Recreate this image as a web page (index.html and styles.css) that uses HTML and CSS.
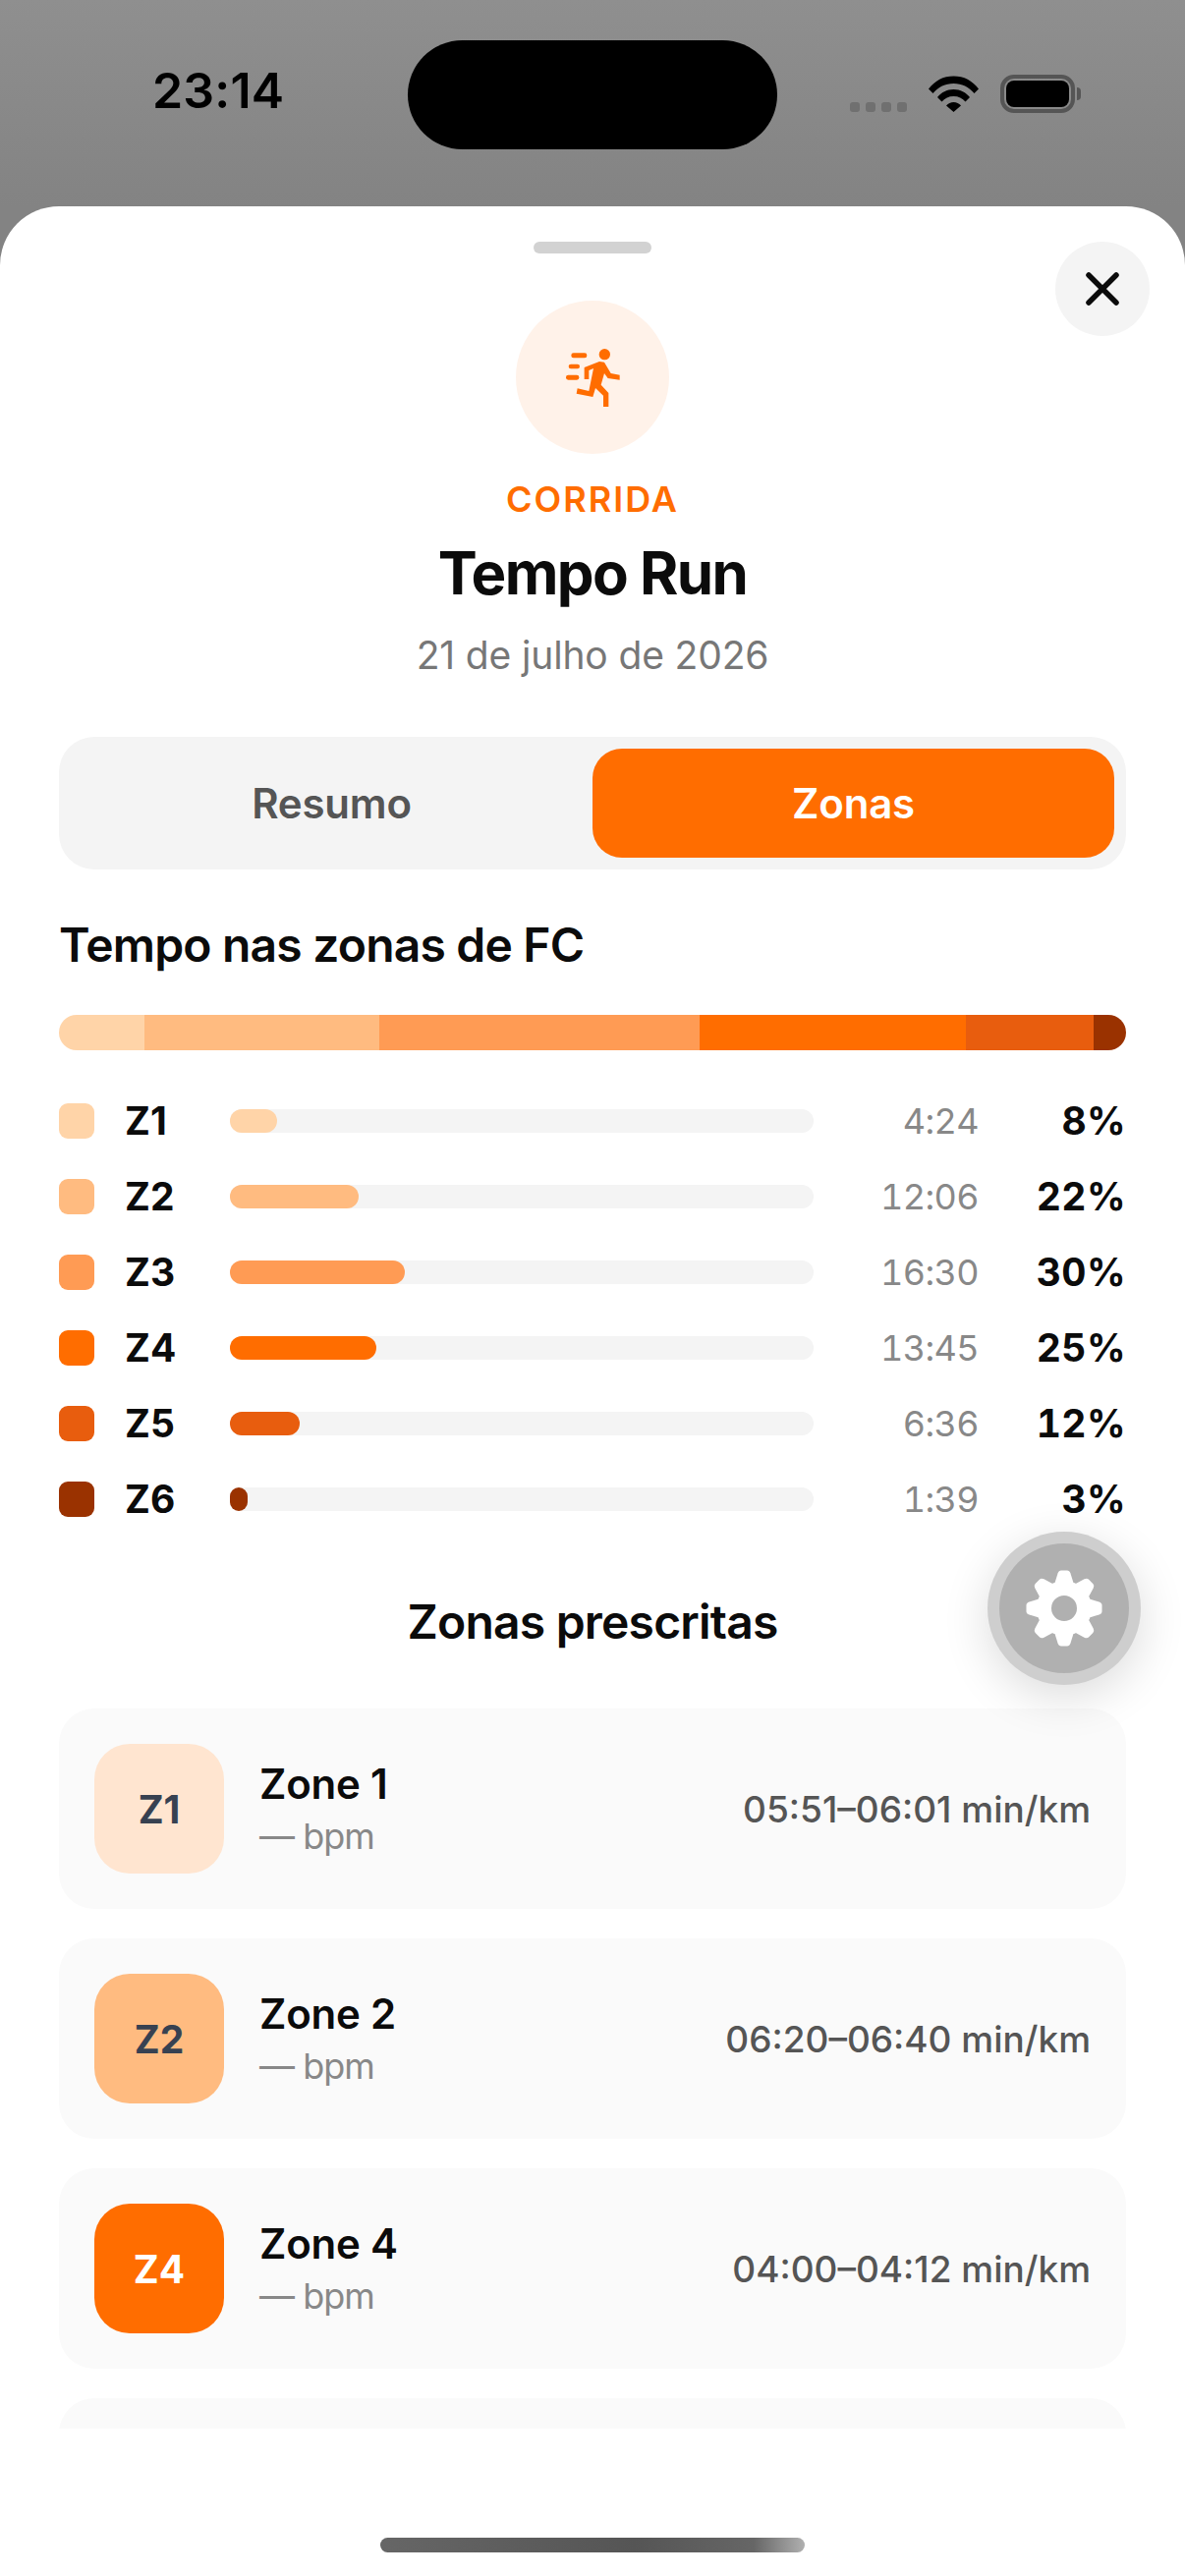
FILE: index.html
```html
<!doctype html>
<html lang="pt-br">
    <head>
        <meta charset="utf-8">
        <title>Tempo Run</title>
        <link rel="stylesheet" href="styles.css">
    </head>
    <body>
        <div class="statusbar">
            <div class="time">23:14</div>
            <div class="island"></div>
            <div class="indicators">
                <div class="signal"><i></i><i></i><i></i><i></i></div>
                <svg class="wifi" width="51" height="37" viewBox="0 0 51 37">
                    <path d="M0 13.5C6.5 5 15 0.5 25.500 0.500S44.500 5 51 13.500L46.500 18C41 11.500 34 8 25.500 8S10 11.500 4.500 18Z"/>
                    <path d="M9 22C13 17 18.500 14 25.500 14S38 17 42 22L37.500 26.500C34.500 23 30.500 21 25.500 21S16.500 23 13.500 26.500Z"/>
                    <path d="M18 30.500C20 28.500 22.500 27 25.500 27S31 28.500 33 30.500L25.500 37Z"/>
                </svg>
                <div class="battery"><div class="battery-fill"></div></div>
                <div class="battery-nub"></div>
            </div>
        </div>

        <div class="sheet">
            <div class="close">
                <svg width="36" height="36" viewBox="0 0 36 36"><path d="M4 4L32 32M32 4L4 32"/></svg>
            </div>

            <div class="content">
                <div class="handle"></div>
                <div class="sport-icon">
                    <svg width="80" height="80" viewBox="69 42 240 240">
                        <circle cx="226" cy="92" r="17"/>
                        <rect x="124" y="88" width="48" height="15" rx="7"/>
                        <rect x="116" y="122" width="34" height="14" rx="7"/>
                        <rect x="108" y="155" width="40" height="15" rx="7"/>
                        <path d="M164 132L210 114L225 116L245 150L272 155V170L236 165L225 150L215 185L238 210V252H222V218L198 195L190 222L140 212L143 196L178 204L192 135L178 141V168H164Z"/>
                    </svg>
                </div>
                <div class="sport">CORRIDA</div>
                <h1>Tempo Run</h1>
                <div class="date">21 de julho de 2026</div>

                <div class="tabs">
                    <div class="tab">Resumo</div>
                    <div class="tab active">Zonas</div>
                </div>

                <h2>Tempo nas zonas de FC</h2>

                <div class="stack">
                    <div class="z1" style="width:8%"></div>
                    <div class="z2" style="width:22%"></div>
                    <div class="z3" style="width:30%"></div>
                    <div class="z4" style="width:25%"></div>
                    <div class="z5" style="width:12%"></div>
                    <div class="z6" style="width:3%"></div>
                </div>

                <div class="rows">
                    <div class="row">
                        <div class="swatch z1"></div><div class="label">Z1</div>
                        <div class="track"><div class="fill z1" style="width:8%"></div></div>
                        <div class="dur">4:24</div><div class="pct">8%</div>
                    </div>
                    <div class="row">
                        <div class="swatch z2"></div><div class="label">Z2</div>
                        <div class="track"><div class="fill z2" style="width:22%"></div></div>
                        <div class="dur">12:06</div><div class="pct">22%</div>
                    </div>
                    <div class="row">
                        <div class="swatch z3"></div><div class="label">Z3</div>
                        <div class="track"><div class="fill z3" style="width:30%"></div></div>
                        <div class="dur">16:30</div><div class="pct">30%</div>
                    </div>
                    <div class="row">
                        <div class="swatch z4"></div><div class="label">Z4</div>
                        <div class="track"><div class="fill z4" style="width:25%"></div></div>
                        <div class="dur">13:45</div><div class="pct">25%</div>
                    </div>
                    <div class="row">
                        <div class="swatch z5"></div><div class="label">Z5</div>
                        <div class="track"><div class="fill z5" style="width:12%"></div></div>
                        <div class="dur">6:36</div><div class="pct">12%</div>
                    </div>
                    <div class="row">
                        <div class="swatch z6"></div><div class="label">Z6</div>
                        <div class="track"><div class="fill z6" style="width:3%"></div></div>
                        <div class="dur">1:39</div><div class="pct">3%</div>
                    </div>
                </div>

                <h2 class="centered">Zonas prescritas</h2>

                <div class="cards">
                    <div class="card">
                        <div class="badge badge-z1">Z1</div>
                        <div class="card-text"><div class="zone-name">Zone 1</div><div class="zone-bpm">— bpm</div></div>
                        <div class="zone-pace">05:51–06:01 min/km</div>
                    </div>
                    <div class="card">
                        <div class="badge z2">Z2</div>
                        <div class="card-text"><div class="zone-name">Zone 2</div><div class="zone-bpm">— bpm</div></div>
                        <div class="zone-pace">06:20–06:40 min/km</div>
                    </div>
                    <div class="card">
                        <div class="badge z4 badge-light">Z4</div>
                        <div class="card-text"><div class="zone-name">Zone 4</div><div class="zone-bpm">— bpm</div></div>
                        <div class="zone-pace">04:00–04:12 min/km</div>
                    </div>
                    <div class="card"></div>
                </div>
            </div>

            <div class="fab">
                <div class="fab-inner">
                    <svg width="78" height="78" viewBox="-39 -39 78 78">
                        <defs><path id="tooth" d="M-10-24L-6.500-35.500Q-5.500-38.500-3-38.500H3Q5.500-38.500 6.500-35.500L10-24Z"/></defs>
                        <use href="#tooth"/>
                        <use href="#tooth" transform="rotate(45)"/>
                        <use href="#tooth" transform="rotate(90)"/>
                        <use href="#tooth" transform="rotate(135)"/>
                        <use href="#tooth" transform="rotate(180)"/>
                        <use href="#tooth" transform="rotate(225)"/>
                        <use href="#tooth" transform="rotate(270)"/>
                        <use href="#tooth" transform="rotate(315)"/>
                        <path fill-rule="evenodd" d="M-28 0A28 28 0 1 1 28 0A28 28 0 1 1-28 0ZM-13 0A13 13 0 1 0 13 0A13 13 0 1 0-13 0Z"/>
                    </svg>
                </div>
            </div>

            <div class="home"></div>
        </div>
    </body>
</html>
```

FILE: styles.css
```css
html, body {margin: 0; padding: 0;}
body {width: 1206px; height: 2622px; display: flex; flex-direction: column; overflow: hidden; background: linear-gradient(#8f8f8f, #838383 210px); font-family: Inter, "Liberation Sans", sans-serif; color: #0b0b0b;}

.statusbar {height: 210px; flex: none; display: grid; grid-template-columns: 415px 376px 1fr; align-items: start;}
.time {padding: 62px 0 0 155px; font-size: 50px; line-height: 60px; font-weight: 600; letter-spacing: 0.2px; color: #000;}
.island {height: 111px; margin-top: 41px; background: #000; border-radius: 56px;}
.indicators {display: flex; align-items: flex-start; padding: 76px 0 0 74px;}
.signal {display: flex; gap: 6px; margin-top: 28px;}
.signal i {width: 10px; height: 10px; border-radius: 3px; background: #707070;}
.wifi {margin: 1px 0 0 22px; fill: #000;}
.battery {width: 76px; height: 39px; box-sizing: border-box; margin-left: 22px; padding: 2px; border: 4px solid #555; border-radius: 14px;}
.battery-fill {height: 100%; background: #000; border-radius: 8px;}
.battery-nub {width: 4px; height: 13px; margin: 13px 0 0 2px; background: #555; border-radius: 0 4px 4px 0;}

.sheet {position: relative; flex: 1; display: flex; flex-direction: column; background: #fff; border-radius: 60px 60px 0 0;}
.content {height: 2262px; flex: none; box-sizing: border-box; padding: 36px 60px 0; overflow: hidden; border-radius: 60px 60px 0 0;}
.handle {width: 120px; height: 12px; margin: 0 auto; background: #d2d2d2; border-radius: 6px;}
.close {position: absolute; top: 36px; right: 36px; width: 96px; height: 96px; display: flex; align-items: center; justify-content: center; background: #f4f4f4; border-radius: 50%;}
.close path {fill: none; stroke: #0b0b0b; stroke-width: 5.5; stroke-linecap: round;}

.sport-icon {width: 156px; height: 156px; margin: 48px auto 0; display: flex; align-items: center; justify-content: center; background: #fff2e9; border-radius: 50%;}
.sport-icon svg {fill: #ff6d00;}
.sport {margin-top: 24px; text-align: center; font-size: 36px; line-height: 44px; font-weight: 560; letter-spacing: 2px; color: #ff6d00;}
h1 {margin: 17px 0 0; text-align: center; font-size: 60px; line-height: 72px; font-weight: 700; letter-spacing: -1.6px;}
.date {margin-top: 24px; text-align: center; font-size: 39px; line-height: 48px; letter-spacing: -0.15px; color: #777;}

.tabs {display: flex; margin-top: 59px; padding: 12px; background: #f4f4f4; border-radius: 36px;}
.tab {flex: 1; height: 110px; display: flex; align-items: center; justify-content: center; padding-bottom: 1px; font-size: 42px; font-weight: 600; letter-spacing: -0.2px; color: #555; border-radius: 30px;}
.tab.active {background: #ff6d00; color: #fff;}

h2 {margin: 47px 0 0; font-size: 48px; line-height: 60px; font-weight: 600; letter-spacing: -0.8px;}
h2.centered {margin-top: 77px; text-align: center;}

.z1 {background: #ffd4a8;}
.z2 {background: #ffbb80;}
.z3 {background: #ff9b54;}
.z4 {background: #ff6d00;}
.z5 {background: #e85d0e;}
.z6 {background: #9a3200;}

.stack {display: flex; height: 36px; margin-top: 41px; overflow: hidden; border-radius: 18px;}

.rows {display: flex; flex-direction: column; gap: 41px; margin-top: 54px;}
.row {display: grid; grid-template-columns: 36px 138px 594px 168px 1fr; grid-template-rows: 36px; align-items: center; height: 36px;}
.swatch {height: 36px; border-radius: 9px;}
.label {margin-left: 31px; font-size: 39px; line-height: 36px; font-weight: 700;}
.track {height: 24px; background: #f4f4f4; border-radius: 12px;}
.fill {height: 100%; border-radius: 12px;}
.dur {text-align: right; font-size: 36px; line-height: 36px; letter-spacing: -0.6px; font-variant-numeric: tabular-nums; color: #888;}
.pct {text-align: right; font-size: 39px; line-height: 36px; font-weight: 700; letter-spacing: 0.4px; font-variant-numeric: tabular-nums;}

.cards {display: flex; flex-direction: column; gap: 30px; margin-top: 58px;}
.card {height: 204px; flex: none; box-sizing: border-box; display: flex; align-items: center; padding: 0 36px; background: #fafafa; border-radius: 36px;}
.badge {width: 132px; height: 132px; flex: none; display: flex; align-items: center; justify-content: center; font-size: 39px; font-weight: 700; color: #374151; border-radius: 36px;}
.badge-z1 {background: #ffe5d0;}
.badge-light {color: #fff;}
.card-text {margin-left: 36px; flex: 1;}
.zone-name {font-size: 42px; line-height: 54px; font-weight: 600; letter-spacing: -0.2px;}
.zone-bpm {margin-top: 2px; font-size: 36px; line-height: 48px; letter-spacing: -1px; color: #888;}
.zone-pace {font-size: 37px; font-weight: 500; color: #555;}

.fab {position: absolute; top: 1349px; right: 45px; width: 156px; height: 156px; display: flex; align-items: center; justify-content: center; background: #cecece; border-radius: 50%; box-shadow: 0 12px 48px rgba(0, 0, 0, 0.14);}
.fab-inner {width: 132px; height: 132px; display: flex; align-items: center; justify-content: center; background: #b0b0b0; border-radius: 50%;}
.fab-inner svg {fill: #fff;}

.home {width: 432px; height: 15px; margin: 111px auto 0; background: linear-gradient(90deg, #666, #555 60%, #666 88%, #b0b0b0); border-radius: 8px;}
```
